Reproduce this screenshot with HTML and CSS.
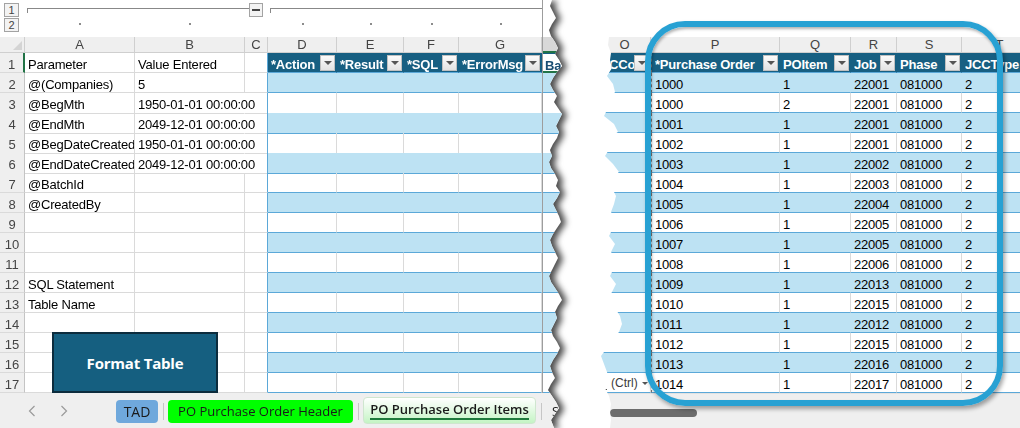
FILE: index.html
```html
<!DOCTYPE html>
<html lang="en">
<head>
    <meta charset="UTF-8">
    <title>PO Purchase Order Items</title>
    <link rel="stylesheet" href="styles.css">
</head>
<body>
<div class="sheet">
    <div class="left-wrap">
        <div class="left">
            <div class="o-row">
                <b class="lvl">1</b><span class="bar bar-ab"></span><span class="minus"></span><span class="bar bar-dg"></span>
            </div>
            <div class="o-row">
                <b class="lvl">2</b><i class="dot"></i><i class="dot"></i><i></i><i class="dot"></i><i class="dot"></i><i class="dot"></i><i class="dot"></i>
            </div>

            <div class="row l-row cols"><span class="corner"></span><span>A</span><span>B</span><span>C</span><span>D</span><span>E</span><span>F</span><span>G</span><span class="act-col"></span></div>
            <div class="row l-row head"><span class="rn act">1</span><span>Parameter</span><span>Value Entered</span><span></span><span><b>*Action</b><i></i></span><span><b>*Result</b><i></i></span><span><b>*SQL</b><i></i></span><span><b>*ErrorMsg</b><i></i></span><span class="active"><b>BatchSeq</b></span></div>
            <div class="row l-row data alt"><span class="rn">2</span><span>@(Companies)</span><span>5</span><span></span><span></span><span></span><span></span><span></span><span></span></div>
            <div class="row l-row data"><span class="rn">3</span><span>@BegMth</span><span class="spill">1950-01-01 00:00:00</span><span></span><span></span><span></span><span></span><span></span><span></span></div>
            <div class="row l-row data alt"><span class="rn">4</span><span>@EndMth</span><span class="spill">2049-12-01 00:00:00</span><span></span><span></span><span></span><span></span><span></span><span></span></div>
            <div class="row l-row data"><span class="rn">5</span><span>@BegDateCreated</span><span class="spill">1950-01-01 00:00:00</span><span></span><span></span><span></span><span></span><span></span><span></span></div>
            <div class="row l-row data alt"><span class="rn">6</span><span>@EndDateCreated</span><span class="spill">2049-12-01 00:00:00</span><span></span><span></span><span></span><span></span><span></span><span></span></div>
            <div class="row l-row data"><span class="rn">7</span><span>@BatchId</span><span></span><span></span><span></span><span></span><span></span><span></span><span></span></div>
            <div class="row l-row data alt"><span class="rn">8</span><span>@CreatedBy</span><span></span><span></span><span></span><span></span><span></span><span></span><span></span></div>
            <div class="row l-row data"><span class="rn">9</span><span></span><span></span><span></span><span></span><span></span><span></span><span></span><span></span></div>
            <div class="row l-row data alt"><span class="rn">10</span><span></span><span></span><span></span><span></span><span></span><span></span><span></span><span></span></div>
            <div class="row l-row data"><span class="rn">11</span><span></span><span></span><span></span><span></span><span></span><span></span><span></span><span></span></div>
            <div class="row l-row data alt"><span class="rn">12</span><span>SQL Statement</span><span></span><span></span><span></span><span></span><span></span><span></span><span></span></div>
            <div class="row l-row data"><span class="rn">13</span><span>Table Name</span><span></span><span></span><span></span><span></span><span></span><span></span><span></span></div>
            <div class="row l-row data alt"><span class="rn">14</span><span></span><span></span><span></span><span></span><span></span><span></span><span></span><span></span></div>
            <div class="row l-row data"><span class="rn">15</span><span></span><span></span><span></span><span></span><span></span><span></span><span></span><span></span></div>
            <div class="row l-row data alt"><span class="rn">16</span><span></span><span></span><span></span><span></span><span></span><span></span><span></span><span></span></div>
            <div class="row l-row data"><span class="rn">17</span><span></span><span></span><span></span><span></span><span></span><span></span><span></span><span></span></div>

            <div class="tabs">
                <svg class="nav" width="8" height="12" viewBox="0 0 8 12"><path d="M6.5 1 1.5 6l5 5" fill="none" stroke="#9a9a9a" stroke-width="1.2"/></svg>
                <svg class="nav" width="8" height="12" viewBox="0 0 8 12"><path d="M1.5 1l5 5-5 5" fill="none" stroke="#9a9a9a" stroke-width="1.2"/></svg>
                <span class="tab tab-tad">TAD</span><i class="sep"></i>
                <span class="tab tab-head">PO Purchase Order Header</span><i class="sep"></i>
                <span class="tab tab-items"><em>PO Purchase Order Items</em></span><i class="sep"></i>
                <span class="tab tab-next">SL Subcontract</span>
            </div>

            <div class="freeze"></div>
            <div class="format-btn">Format Table</div>
        </div>
    </div>

    <div class="right">
        <div class="row r-row cols"><span>O</span><span>P</span><span>Q</span><span>R</span><span>S</span><span>T</span></div>
        <div class="row r-row head"><span><b>JCCo</b><i></i></span><span><b>*Purchase Order</b><i></i></span><span><b>POItem</b><i></i></span><span><b>Job</b><i></i></span><span><b>Phase</b><i></i></span><span><b>JCCType</b></span></div>
        <div class="row r-row data alt"><span></span><span>1000</span><span>1</span><span>22001</span><span>081000</span><span>2</span></div>
        <div class="row r-row data"><span></span><span>1000</span><span>2</span><span>22001</span><span>081000</span><span>2</span></div>
        <div class="row r-row data alt"><span></span><span>1001</span><span>1</span><span>22001</span><span>081000</span><span>2</span></div>
        <div class="row r-row data"><span></span><span>1002</span><span>1</span><span>22001</span><span>081000</span><span>2</span></div>
        <div class="row r-row data alt"><span></span><span>1003</span><span>1</span><span>22002</span><span>081000</span><span>2</span></div>
        <div class="row r-row data"><span></span><span>1004</span><span>1</span><span>22003</span><span>081000</span><span>2</span></div>
        <div class="row r-row data alt"><span></span><span>1005</span><span>1</span><span>22004</span><span>081000</span><span>2</span></div>
        <div class="row r-row data"><span></span><span>1006</span><span>1</span><span>22005</span><span>081000</span><span>2</span></div>
        <div class="row r-row data alt"><span></span><span>1007</span><span>1</span><span>22005</span><span>081000</span><span>2</span></div>
        <div class="row r-row data"><span></span><span>1008</span><span>1</span><span>22006</span><span>081000</span><span>2</span></div>
        <div class="row r-row data alt"><span></span><span>1009</span><span>1</span><span>22013</span><span>081000</span><span>2</span></div>
        <div class="row r-row data"><span></span><span>1010</span><span>1</span><span>22015</span><span>081000</span><span>2</span></div>
        <div class="row r-row data alt"><span></span><span>1011</span><span>1</span><span>22012</span><span>081000</span><span>2</span></div>
        <div class="row r-row data"><span></span><span>1012</span><span>1</span><span>22015</span><span>081000</span><span>2</span></div>
        <div class="row r-row data alt"><span></span><span>1013</span><span>1</span><span>22016</span><span>081000</span><span>2</span></div>
        <div class="row r-row data"><span class="paste"><em>(Ctrl)</em></span><span>1014</span><span>1</span><span>22017</span><span>081000</span><span>2</span></div>
        <div class="hscroll"><span></span></div>
    </div>

    <div class="ring"></div>
</div>
</body>
</html>
```

FILE: styles.css
```css
*{
    margin: 0;
    padding: 0;
    box-sizing: border-box;
}
body{
    width: 1020px;
    height: 428px;
    overflow: hidden;
    background: #fff;
    font-family: "Liberation Sans", Arial, sans-serif;
    font-size: 13px;
    color: #000;
}
.sheet{
    position: relative;
    display: flex;
    justify-content: space-between;
    height: 428px;
}

/* left piece, torn on the right */
.left-wrap{
    flex: none;
    width: 575px;
    filter: drop-shadow(5px 1px 3px rgba(0,0,0,.7));
}
.left{
    position: relative;
    height: 428px;
    background: #fff;
    clip-path: polygon(0 0, 552px 0, 550px 6px, 553px 12px, 556px 18px, 552px 24px, 549px 30px, 551px 36px, 555px 42px, 558px 48px, 555px 54px, 559px 60px, 562px 66px, 557px 72px, 553px 78px, 550px 84px, 553px 90px, 557px 96px, 554px 102px, 558px 108px, 562px 114px, 559px 120px, 556px 126px, 559px 132px, 557px 138px, 553px 144px, 550px 150px, 552px 156px, 549px 162px, 551px 168px, 555px 174px, 558px 180px, 556px 186px, 560px 192px, 557px 198px, 553px 204px, 556px 210px, 559px 216px, 561px 222px, 557px 228px, 553px 234px, 550px 240px, 552px 246px, 555px 252px, 558px 258px, 555px 264px, 552px 270px, 549px 276px, 551px 282px, 555px 288px, 559px 294px, 562px 300px, 558px 306px, 555px 312px, 557px 318px, 554px 324px, 551px 330px, 553px 336px, 557px 342px, 560px 348px, 557px 354px, 553px 360px, 550px 366px, 552px 372px, 555px 378px, 551px 384px, 548px 390px, 552px 396px, 556px 402px, 559px 408px, 555px 414px, 551px 420px, 554px 428px, 0 428px);
}
.freeze{
    position: absolute;
    left: 542px;
    top: 0;
    width: 1px;
    height: 393px;
    background: #9d9d9d;
}

/* outline bar */
.o-row{
    display: grid;
    grid-template-columns: 25px 110px 110px 23px 69px 67px 55px 83px 33px;
    height: 18px;
}
.o-row + .o-row{
    height: 19px;
}
.lvl{
    display: block;
    width: 15px;
    height: 14px;
    margin-left: 4px;
    border: 1px solid #a3a3a3;
    background: #f3f3f3;
    font-weight: normal;
    font-size: 11px;
    line-height: 12px;
    text-align: center;
    color: #444;
}
.o-row:first-child .lvl{
    margin-top: 3px;
}
.bar{
    margin-top: 8px;
    height: 5px;
    border-top: 1px solid #888;
    border-left: 1px solid #888;
}
.bar-ab{
    grid-column: 2 / 4;
    margin-left: 2px;
    margin-right: -4px;
}
.bar-dg{
    grid-column: 5 / 9;
    margin-left: 2px;
}
.minus{
    display: flex;
    align-items: center;
    justify-content: center;
    width: 14px;
    height: 14px;
    margin: 3px 0 0 4px;
    border: 1px solid #a3a3a3;
    background: #f3f3f3;
}
.minus::after{
    content: "";
    width: 8px;
    height: 2px;
    background: #444;
}
.dot{
    display: flex;
    justify-content: center;
    padding-top: 5px;
}
.dot::after{
    content: "";
    width: 2px;
    height: 2px;
    background: #8c8c8c;
}

/* cells */
.row{
    display: grid;
    height: 20px;
}
.l-row{
    grid-template-columns: 25px 110px 110px 23px 69px 67px 55px 83px 33px;
}
.r-row{
    grid-template-columns: 52px 129px 71px 46px 65px 76px;
}
.row span{
    display: block;
    min-width: 0;
    padding: 4px 0 0 3px;
    line-height: 16px;
    border-right: 1px solid #dadada;
    border-bottom: 1px solid #dadada;
    white-space: nowrap;
    overflow: hidden;
    letter-spacing: -.2px;
}
.row span.spill{
    overflow: visible;
    border-right-color: transparent;
}
.cols{
    height: 16px;
}
.row.cols span{
    padding: 0;
    text-align: center;
    line-height: 16px;
    background: #efefef;
    color: #444;
    border-color: #cfcfcf;
    letter-spacing: 0;
}
.row.cols .corner{
    position: relative;
}
.row.cols .corner::after{
    content: "";
    position: absolute;
    right: 2px;
    bottom: 2px;
    border-left: 9px solid transparent;
    border-bottom: 9px solid #d4d4d4;
}
.row.cols .act-col{
    background: #d8d8d8;
    border-bottom: 2px solid #217346;
}
.row .rn{
    padding: 4px 0 0;
    text-align: center;
    background: #efefef;
    color: #444;
    border-right-color: #c4c4c4;
    letter-spacing: 0;
}
.row .rn.act{
    border-right: 2px solid #217346;
}

/* excel table */
.l-row.head span:nth-child(4),
.l-row.data span:nth-child(4){
    border-right-color: #5ba8d8;
}
.l-row.data span:nth-child(n+5),
.r-row.data span{
    border-bottom-color: #5ba8d8;
}
.l-row.alt span:nth-child(n+5),
.r-row.alt span{
    background: #bde2f3;
    border-right-color: #bde2f3;
}
.l-row.head span:nth-child(n+5),
.r-row.head span{
    display: flex;
    align-items: flex-start;
    background: #175f82;
    color: #fff;
    font-weight: bold;
    letter-spacing: -.2px;
    border-right-color: #175f82;
    border-bottom-color: #5ba8d8;
}
.l-row.head span.active{
    background: #fff;
    color: #1a4d72;
    border: 1px solid #175f82;
    border-bottom: 2px solid #217346;
    padding-left: 2px;
}
.head b{
    flex: 1;
    min-width: 0;
    overflow: hidden;
}
.head i{
    flex: none;
    display: flex;
    align-items: center;
    justify-content: center;
    width: 15px;
    height: 16px;
    margin: -2px 1px 0 0;
    background: linear-gradient(#fbfbfb, #e3e3e3);
    border: 1px solid #c0c0c0;
}
.head i::after{
    content: "";
    border-left: 4px solid transparent;
    border-right: 4px solid transparent;
    border-top: 4px solid #555;
}
.r-row.head span:nth-child(2),
.r-row.data span:nth-child(2){
    border-left: 1px dashed #777;
}
.r-row.data span.paste{
    position: relative;
    padding: 3px 0 0 12px;
    font-size: 12px;
    line-height: 14px;
    color: #3a3a3a;
    letter-spacing: 0;
}
.paste::before{
    content: "";
    position: absolute;
    left: 3px;
    top: 12px;
    width: 4px;
    height: 4px;
    border-left: 1px solid #555;
    border-bottom: 1px solid #555;
}
.paste em{
    font-style: normal;
}
.paste em::after{
    content: "";
    display: inline-block;
    margin: 0 0 2px 4px;
    border-left: 3px solid transparent;
    border-right: 3px solid transparent;
    border-top: 3px solid #555;
}

/* sheet tabs */
.tabs{
    display: flex;
    align-items: flex-start;
    height: 35px;
    padding: 7px 0 0 28px;
    background: #efefef;
    font-family: "Open Sans", "Liberation Sans", sans-serif;
    font-size: 13px;
    color: #1a1a1a;
}
.nav{
    flex: none;
    margin-top: 5px;
}
.nav + .nav{
    margin-left: 24px;
}
.tab{
    flex: none;
    height: 23px;
    line-height: 23px;
    text-align: center;
    border-radius: 4px;
    white-space: nowrap;
}
.tab-tad{
    width: 42px;
    margin-left: 48px;
    background: #6fa8dc;
    font-size: 14px;
}
.sep{
    flex: none;
    width: 1px;
    height: 17px;
    margin: 3px 4px 0 5px;
    background: #c6c6c6;
}
.tab-head{
    width: 185px;
    background: #00ff00;
}
.tab-items{
    width: 173px;
    height: 27px;
    margin-top: -3px;
    padding-top: 2px;
    line-height: normal;
    background: linear-gradient(#ffffff, #c4f4c4);
    border: 1px solid #cfe6cf;
    font-weight: 600;
}
.tab-items em{
    display: inline-block;
    font-style: normal;
    border-bottom: 2px solid #1e7b3c;
}
.tab-next{
    padding-left: 6px;
}

.format-btn{
    position: absolute;
    left: 52px;
    top: 332px;
    width: 166px;
    height: 61px;
    display: flex;
    align-items: center;
    justify-content: center;
    background: #155f80;
    border: 2px solid #0c2c3d;
    color: #fff;
    font: 700 15px "Open Sans", "Liberation Sans", sans-serif;
    letter-spacing: -.2px;
}

/* right piece, torn on the left */
.right{
    flex: none;
    width: 439px;
    height: 428px;
    margin-right: -18px;
    padding-top: 37px;
    clip-path: polygon(10px 0, 100% 0, 100% 100%, 11px 428px, 12px 420px, 11px 412px, 12px 404px, 10px 396px, 6px 388px, 11px 380px, 8px 372px, 5px 364px, 2px 356px, 8px 348px, 14px 340px, 20px 332px, 23px 324px, 21px 316px, 16px 308px, 9px 300px, 13px 292px, 17px 284px, 11px 276px, 15px 268px, 19px 260px, 12px 252px, 16px 244px, 10px 236px, 14px 228px, 18px 220px, 12px 212px, 15px 204px, 17px 196px, 13px 188px, 10px 180px, 20px 172px, 14px 164px, 6px 156px, 11px 148px, 7px 140px, 19px 132px, 15px 124px, 5px 116px, 9px 108px, 12px 100px, 16px 92px, 14px 84px, 8px 76px, 13px 68px, 11px 60px, 12px 53px, 9px 45px, 10px 37px);
}
.hscroll{
    height: 35px;
    padding: 15px 0 0 11px;
    background: #efefef;
    border-top: 1px solid #e2e2e2;
}
.hscroll span{
    display: block;
    width: 87px;
    height: 8px;
    border-radius: 4px;
    background: #6c6c6c;
}

/* highlight ring */
.ring{
    position: absolute;
    left: 645px;
    top: 21px;
    width: 358px;
    height: 385px;
    border: 6px solid #28a1d3;
    border-radius: 40px;
    box-shadow: 2px 3px 4px rgba(0,0,0,.35), inset 1px 2px 3px rgba(0,0,0,.3);
}
```
